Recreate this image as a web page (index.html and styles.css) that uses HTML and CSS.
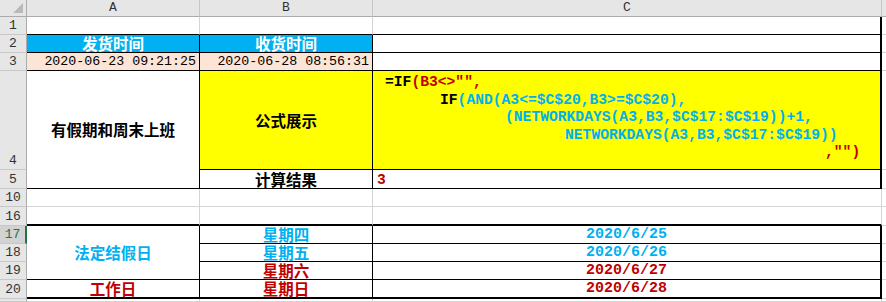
FILE: index.html
```html
<!DOCTYPE html>
<html lang="zh-CN">
<head>
<meta charset="utf-8">
<title>Sheet</title>
<link rel="stylesheet" href="styles.css">
</head>
<body>
<div class="sheet">
  <div class="corner"><span class="tri"></span></div>
  <div class="ch">A</div>
  <div class="ch">B</div>
  <div class="ch">C</div>
  <div class="ch last"></div>

  <div class="rh">1</div>
  <div class="c bb"></div>
  <div class="c bb"></div>
  <div class="c bb br2"></div>
  <div class="c d"></div>

  <div class="rh">2</div>
  <div class="c lbl hd bb br">发货时间</div>
  <div class="c lbl hd bb br">收货时间</div>
  <div class="c bb br2"></div>
  <div class="c d"></div>

  <div class="rh">3</div>
  <div class="c dt bb br">2020-06-23 09:21:25</div>
  <div class="c dt bb br">2020-06-28 08:56:31</div>
  <div class="c bb br2"></div>
  <div class="c d"></div>

  <div class="rh">4</div>
  <div class="c lbl mid span2 bb br">有假期和周末上班</div>
  <div class="c lbl mid yel bb br">公式展示</div>
  <div class="c formula yel bb br2">
    <div class="fl l1"><span class="k">=IF</span><span class="r">(B3&lt;&gt;"",</span></div>
    <div class="fl l2"><span class="k">IF</span><span class="b">(AND(A3&lt;=$C$20,B3&gt;=$C$20),</span></div>
    <div class="fl l3"><span class="b">(NETWORKDAYS(A3,B3,$C$17:$C$19))+1,</span></div>
    <div class="fl l4"><span class="b">NETWORKDAYS(A3,B3,$C$17:$C$19))</span></div>
    <div class="fl l5"><span class="r">,"")</span></div>
  </div>
  <div class="c d"></div>

  <div class="rh">5</div>
  <div class="c lbl bb br">计算结果</div>
  <div class="c res bb br2">3</div>
  <div class="c d"></div>

  <div class="rh">10</div>
  <div class="c"></div>
  <div class="c"></div>
  <div class="c"></div>
  <div class="c d"></div>

  <div class="rh">16</div>
  <div class="c bb2"></div>
  <div class="c bb2"></div>
  <div class="c bb2"></div>
  <div class="c d"></div>

  <div class="rh sel">17</div>
  <div class="c lbl mid blue span3 bb br">法定结假日</div>
  <div class="c lbl blue bb br">星期四</div>
  <div class="c num blue bb br2">2020/6/25</div>
  <div class="c d"></div>

  <div class="rh">18</div>
  <div class="c lbl blue bb br">星期五</div>
  <div class="c num blue bb br2">2020/6/26</div>
  <div class="c d"></div>

  <div class="rh">19</div>
  <div class="c lbl red bb br">星期六</div>
  <div class="c num red bb br2">2020/6/27</div>
  <div class="c d"></div>

  <div class="rh">20</div>
  <div class="c lbl red bb2 br">工作日</div>
  <div class="c lbl red bb2 br">星期日</div>
  <div class="c num red bb2 br2">2020/6/28</div>
  <div class="c d"></div>

  <div class="rh"></div>
  <div class="c"></div>
  <div class="c"></div>
  <div class="c"></div>
  <div class="c d"></div>
</div>
</body>
</html>
```

FILE: styles.css
```css
* {
  box-sizing: border-box;
  margin: 0;
  padding: 0;
}

html,
body {
  background: #ffffff;
}

body {
  width: 886px;
  height: 302px;
  overflow: hidden;
  font-family: "Noto Sans CJK SC", "Noto Sans", sans-serif;
  color: #000000;
}

.sheet {
  display: grid;
  grid-template-columns: 27px 173px 173px 509px 4px;
  grid-template-rows: 17px 18px 18px 18px 99px 19px 18px 19px 18px 18px 18px 19px 3px;
}

/* headers */
.corner {
  background: #e6e6e6;
  border-right: 1px solid #ababab;
  border-bottom: 1px solid #ababab;
  display: flex;
  align-items: flex-end;
  justify-content: flex-end;
  padding: 0 3px 3px 0;
}

.tri {
  width: 0;
  height: 0;
  border-left: 10px solid transparent;
  border-bottom: 10px solid #b9b9b9;
}

.ch {
  background: #e6e6e6;
  border-right: 1px solid #c6c6c6;
  border-bottom: 1px solid #ababab;
  font-family: "Liberation Mono", monospace;
  font-size: 13px;
  line-height: 16px;
  color: #333333;
  text-align: center;
}

.ch.last {
  border-right: none;
}

.rh {
  background: #e6e6e6;
  border-right: 1px solid #ababab;
  border-bottom: 1px solid #c8c8c8;
  font-family: "Liberation Mono", monospace;
  font-size: 13px;
  line-height: 15px;
  color: #333333;
  display: flex;
  align-items: flex-end;
  justify-content: center;
  padding-bottom: 1px;
}

.rh.sel {
  background: #d2d2d2;
  color: #217346;
  border-right: 2px solid #217346;
}

/* cells */
.c {
  border-right: 1px solid #d4d4d4;
  border-bottom: 1px solid #d4d4d4;
  display: flex;
  align-items: flex-end;
  justify-content: center;
  white-space: nowrap;
}

.c.d {
  border-right: none;
}

.bb {
  border-bottom-color: #000000;
}

.bb2 {
  border-bottom: 2px solid #000000;
}

.br {
  border-right-color: #000000;
}

.br2 {
  border-right: 2px solid #000000;
}

.span2 {
  grid-row: span 2;
}

.span3 {
  grid-row: span 3;
}

.mid {
  align-items: center;
}

.lbl {
  font-size: 15.5px;
  font-weight: 700;
  line-height: 17px;
}

.hd {
  background: #00b0f0;
  color: #ffffff;
}

.yel {
  background: #ffff00;
}

.blue {
  color: #00b0f0;
}

.red {
  color: #c00000;
}

.dt {
  background: #fce4d6;
  justify-content: flex-end;
  padding-right: 3px;
  font-family: "Liberation Mono", monospace;
  font-size: 13.3px;
  line-height: 16px;
}

.num {
  font-family: "Liberation Mono", monospace;
  font-size: 15px;
  font-weight: 700;
  line-height: 16px;
}

.res {
  justify-content: flex-start;
  padding-left: 4px;
  color: #c00000;
  font-family: "Liberation Mono", monospace;
  font-size: 14.67px;
  font-weight: 700;
  line-height: 16px;
}

/* formula */
.formula {
  flex-direction: column;
  align-items: flex-start;
  justify-content: flex-start;
  padding-top: 3px;
  font-family: "Liberation Mono", monospace;
  font-size: 14.67px;
  font-weight: 700;
  line-height: 17.6px;
}

.fl {
  white-space: pre;
}

.l1 { margin-left: 12px; }
.l2 { margin-left: 67px; }
.l3 { margin-left: 132px; }
.l4 { margin-left: 192px; }
.l5 { margin-left: 452px; }

.k { color: #000000; }
.r { color: #c00000; }
.b { color: #00b0f0; }
```
